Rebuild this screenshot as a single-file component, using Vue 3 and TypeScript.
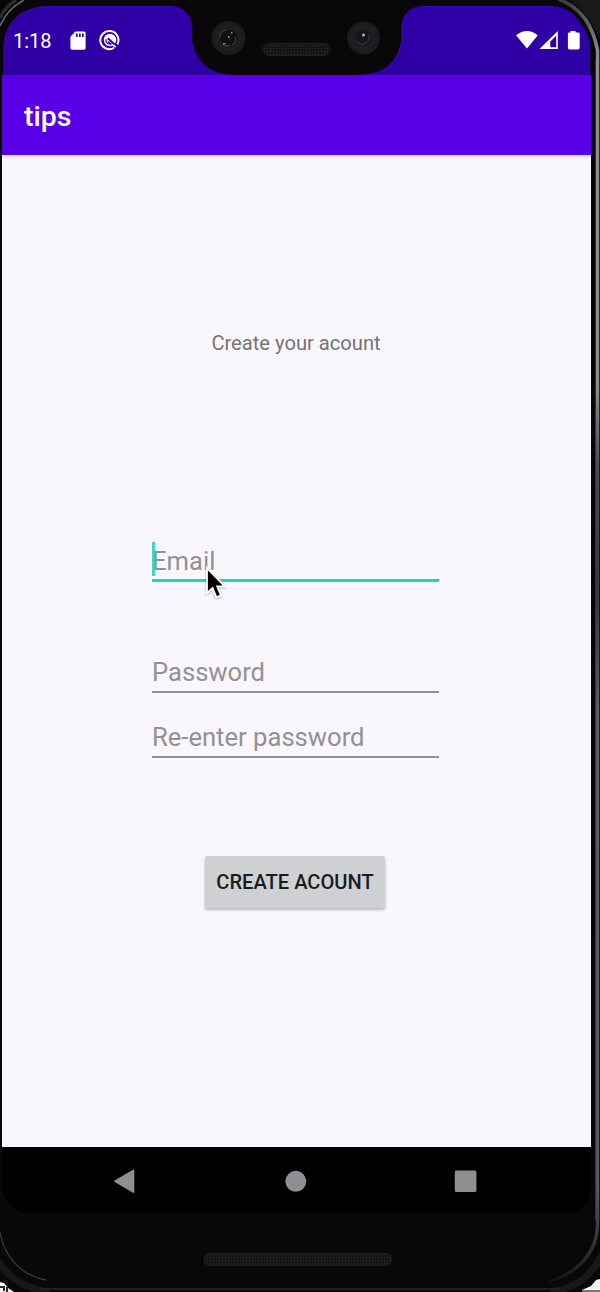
<script setup lang="ts">
interface Field {
  id: string
  label: string
  focused: boolean
}

const fields: Field[] = [
  { id: 'email', label: 'Email', focused: true },
  { id: 'password', label: 'Password', focused: false },
  { id: 'repeat', label: 'Re-enter password', focused: false },
]
</script>

<template>
  <div class="device">
    <div class="screen">
      <header class="status">
        <span class="time">1:18</span>
        <svg class="sd" width="16" height="20" viewBox="0 0 16 20">
          <path fill="#fff" fill-rule="evenodd" d="M5.500 .500H14q1.600 0 1.600 1.600V17q0 1.700-1.600 1.700H2Q.4 18.700 .4 17V5.800ZM6 2.600V6H7.700V2.600ZM9 2.600V6H10.700V2.600ZM12 2.600V6H13.700V2.600Z" />
        </svg>
        <svg class="debug" width="22" height="22" viewBox="0 0 22 22" fill="none">
          <path d="M15 18.900A9.100 9.100 0 1 1 18.300 15.500" stroke="#fff" stroke-width="2" />
          <circle cx="11" cy="11" r="6.200" fill="#fff" />
          <path d="M8.800 9.300L18 17.600" stroke="#3000a7" stroke-width="2" />
          <path d="M7 10.200V12.500Q8.500 15.200 12 15L9.200 12.400" stroke="#3000a7" stroke-width="1.300" />
          <path d="M14 15.800L16.600 18.200" stroke="#fff" stroke-width="1.800" />
        </svg>
        <svg class="signals" width="66" height="22" viewBox="0 0 66 22" fill="#fff">
          <path d="M0 5.300Q11 -3.200 21.800 5.300L11 18.600Z" />
          <path fill-rule="evenodd" d="M41.800 1V19H23.500ZM40.200 5.800L34.300 11.500V17.300H40.200Z" />
          <path d="M54.500 1H59.500V2.600H62Q63.700 2.600 63.700 4V17.800Q63.700 19.400 62 19.400H53.500Q51.900 19.400 51.900 17.800V4Q51.900 2.600 53.500 2.600H54.500Z" />
        </svg>
      </header>
      <div class="appbar"><h1>tips</h1></div>
      <main>
        <p class="heading">Create your acount</p>
        <div class="form">
          <div v-for="f in fields" :key="f.id" class="field" :class="[f.id, { focused: f.focused }]">
            <span class="hint">{{ f.label }}</span>
            <i v-if="f.focused" class="caret"></i>
          </div>
        </div>
        <button type="button">CREATE ACOUNT</button>
      </main>
      <nav>
        <svg width="589" height="66" viewBox="0 0 589 66" fill="#918e93">
          <path d="M131 22.700Q132.300 22 132.300 23.300V45Q132.300 46.400 131 45.700L112.600 35Q111.600 34.300 112.600 33.600Z" />
          <circle cx="293.800" cy="34.300" r="10.500" />
          <rect x="452.800" y="23.500" width="21.600" height="21.600" rx="1.500" />
        </svg>
      </nav>
    </div>

    <svg class="bezel" width="600" height="1292" viewBox="0 0 600 1292">
      <defs>
        <pattern id="mesh" width="3" height="3" patternUnits="userSpaceOnUse">
          <rect width="3" height="3" fill="#131315" />
          <rect width="1" height="1" fill="#313133" />
          <rect x="1.500" y="1.500" width="1" height="1" fill="#252527" />
        </pattern>
        <linearGradient id="rail" gradientUnits="userSpaceOnUse" x1="0" y1="0" x2="0" y2="1292">
          <stop offset="0" stop-color="#3c3c3e" />
          <stop offset=".04" stop-color="#8c8c8c" />
          <stop offset=".3" stop-color="#8c8c8c" />
          <stop offset=".36" stop-color="#4c4c50" />
          <stop offset=".46" stop-color="#38383b" />
          <stop offset=".55" stop-color="#5c5c5f" />
          <stop offset=".92" stop-color="#58585b" />
          <stop offset="1" stop-color="#111113" />
        </linearGradient>
        <radialGradient id="lens">
          <stop offset="0" stop-color="#2c2c30" />
          <stop offset=".5" stop-color="#151517" />
          <stop offset=".62" stop-color="#201f21" />
          <stop offset="1" stop-color="#1b191b" />
        </radialGradient>
      </defs>
      <path fill="#09070a" fill-rule="evenodd" d="M0 0H600V1292H0ZM2 75H3.500V49C3.500 22 22 6 49 6H168C184 6 191.500 15 191.500 29V34C191.500 58 207 75 233 75H361C386 75 401.500 58 401.500 34V29C401.500 15 409 6 425 6H547C573 6 590 25 590 50V75H591V1147H2Z" />
      <path fill="#000" d="M2 1147H591V1189Q588 1207 575 1213H25Q8 1209 2 1190Z" />
      <path fill="none" stroke="#4900d5" stroke-opacity=".5" d="M3.800 75V49C3.800 22 22 6.400 49 6.400H168C184 6.400 191 15 191 29V34C191 58 207 75 233 75M361 75C386 75 402 58 402 34V29C402 15 409 6.400 425 6.400H547C573 6.400 589.600 25 589.600 50V75" />

      <path fill="#19181b" d="M570 0H600V40Q588 12 570 0Z" />
      <path fill="none" stroke="url(#rail)" stroke-width="3.500" d="M558 -1Q590 10 597.500 50V1225C597 1253 577 1274 549 1280" />
      <path fill="none" stroke="#09070a" stroke-width="3" d="M552 0Q586 12 594 52V1225C593 1251 574 1272 546 1280" />
      <path fill="none" stroke="#343436" stroke-width="1" d="M595.500 60V1220" />
      <path fill="none" stroke="#68686b" stroke-width="1.500" d="M0 26Q7 9 24 0" />
      <path fill="none" stroke="#2c2c2e" stroke-width="3" d="M0 18Q5 7 16 0" />
      <path fill="none" stroke="#38383b" stroke-width="1.300" d="M0 1232C4 1256 20 1275 46 1280" />
      <path fill="none" stroke="#18171a" stroke-width="7" d="M-2 1261Q15 1288 50 1292M602 1254Q588 1287 550 1292" />
      <path stroke="#202022" stroke-width="2" d="M40 1289H560" />
      <path fill="#f4f4f4" d="M0 1282L4 1283L8 1288L14 1292H0ZM600 1279L596 1280L591 1286L582 1290H600Z" />
      <path fill="#777" d="M582 1290H600V1292H582Z" />
      <path fill="none" stroke="#29282a" stroke-width="2" d="M0 1287H4V1291M7 1287V1292" />

      <circle cx="228.500" cy="38" r="17" fill="url(#lens)" />
      <circle cx="228.500" cy="38" r="9" fill="#101013" stroke="#242427" />
      <path d="M220 37Q220 31 226 30M223 44Q225 47 230 45M235 37Q237 43 232 45" fill="none" stroke="#4a4a4e" />
      <path d="M231 32h1.500v1.500h-1.500ZM228 36h1.500v2h-1.500ZM223 43h2.500v1.500h-2.500Z" fill="#928c8a" />
      <circle cx="363.500" cy="38" r="16.500" fill="url(#lens)" />
      <circle cx="363.500" cy="38" r="8.500" fill="#151519" stroke="#242427" />
      <path d="M357 41Q362 48 369 40V35" fill="none" stroke="#45454a" />
      <circle cx="363.500" cy="35" r="1.500" fill="#bbb4b2" />
      <rect x="263" y="43.500" width="67" height="12" rx="6" fill="url(#mesh)" stroke="#1f1f21" />
      <rect x="204" y="1253.500" width="187.500" height="12" rx="5.500" fill="url(#mesh)" stroke="#1c1c1e" />
    </svg>

    <svg class="pointer" width="26" height="38" viewBox="0 0 26 38">
      <path fill="#000" stroke="#fff" stroke-width="1.800" d="M3 2V27L8.600 22L12.400 31.400L17 29.400L13.200 20.300H20.800Z" />
    </svg>
  </div>
</template>

<style scoped>
.device {
  position: relative;
  width: 600px;
  height: 1292px;
  overflow: hidden;
  background: #09070a;
  font-family: Roboto, sans-serif;
}
.screen {
  width: 589px;
  margin-left: 2px;
  padding-top: 6px;
}
.status {
  display: flex;
  align-items: flex-start;
  height: 69px;
  background: #3000a7;
  color: #fff;
}
.time {
  margin: 22px 0 0 11px;
  width: 39px;
  font-size: 20px;
  line-height: 26px;
}
.sd { margin: 25px 0 0 18px; }
.debug { margin: 23px 0 0 12.500px; }
.signals { margin: 24px 9px 0 auto; }
.appbar {
  position: relative;
  display: flex;
  align-items: center;
  height: 80px;
  padding-left: 22px;
  background: #5800e8;
  box-shadow: 0 1px 4px #0003;
}
h1 {
  margin: 4px 0 0;
  color: #fff;
  font-size: 28.400px;
  line-height: 34px;
  font-weight: 500;
}
main {
  display: flex;
  flex-direction: column;
  align-items: center;
  box-sizing: border-box;
  height: 992px;
  background: #f9f7fb;
}
.heading {
  margin: 175px 0 0 -1px;
  color: #747375;
  font-size: 20.150px;
  line-height: 26px;
  white-space: nowrap;
}
.form {
  width: 287px;
  margin: 187px 0 0 -2px;
}
.field {
  position: relative;
  box-sizing: border-box;
  height: 39px;
  border-bottom: 2px solid #919093;
  color: #929194;
  font-size: 25.600px;
  line-height: 38px;
  white-space: nowrap;
}
.field.focused {
  border-bottom: 3px solid #18d5be;
  line-height: 36px;
}
.password { margin-top: 72px; }
.repeat { margin-top: 26px; }
.password, .repeat { line-height: 36px; }
.caret {
  position: absolute;
  left: 0;
  top: -1px;
  width: 3px;
  height: 34px;
  background: #18d5be;
  opacity: .85;
}
button {
  width: 180px;
  height: 52px;
  margin: 98px 3px 0 0;
  padding: 0;
  border: 0;
  border-radius: 2px;
  background: #ced0d2;
  box-shadow: 0 2px 3px #0004;
  color: #1b1b1e;
  font: 500 20.100px/53px Roboto, sans-serif;
  white-space: nowrap;
}
nav {
  height: 66px;
  background: #000;
}
nav svg { display: block; position: relative; z-index: 2; }
.bezel, .pointer {
  position: absolute;
  pointer-events: none;
}
.bezel { left: 0; top: 0; z-index: 1; }
.pointer {
  left: 204px;
  top: 566px;
  filter: drop-shadow(0 1px 1px #0004);
}
</style>

<style>
body { margin: 0; background: #09070a; }
</style>
